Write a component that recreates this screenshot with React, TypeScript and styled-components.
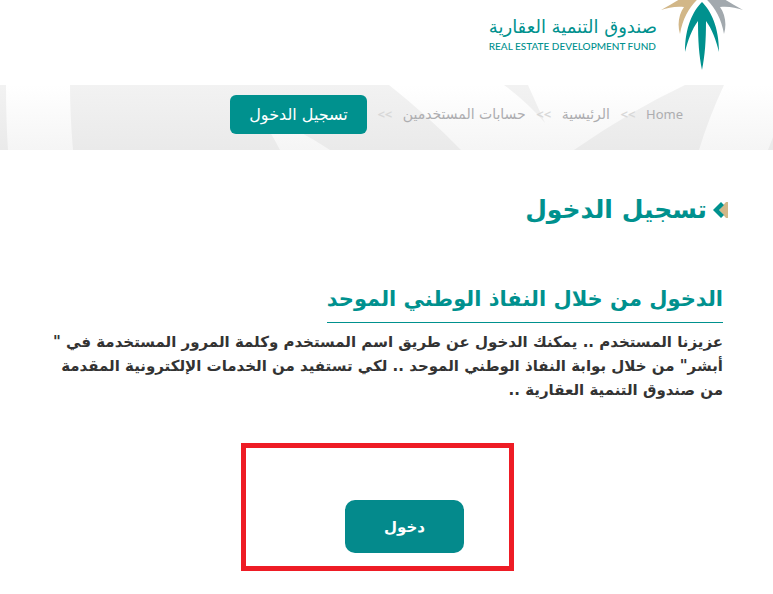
import React from "react";
import styled, { createGlobalStyle } from "styled-components";

const teal = "#00918e";

const GlobalStyle = createGlobalStyle`
  * { box-sizing: border-box; }
  body {
    margin: 0;
    background: #fff;
    color: #333;
    font-family: "DejaVu Sans", "Noto Sans", sans-serif;
  }
`;

const Page = styled.div`
  direction: rtl;
  overflow-x: hidden;
`;

const Header = styled.header`
  height: 85px;
  padding: 0 30px;
`;

const Brand = styled.a`
  display: inline-flex;
  align-items: flex-start;
  gap: 4px;
  color: ${teal};
  text-decoration: none;
`;

const BrandMark = styled.svg`
  display: block;
  width: 82px;
  height: 72px;
`;

const BrandText = styled.span`
  display: flex;
  flex-direction: column;
  padding-top: 15px;
  white-space: nowrap;
`;

const BrandArabic = styled.span`
  font-size: 18px;
  line-height: 24px;
`;

const BrandEnglish = styled.span`
  direction: ltr;
  font-family: Lato, sans-serif;
  font-size: 10px;
  font-weight: 500;
  line-height: 14px;
`;

const Band = styled.nav`
  position: relative;
  height: 65px;
  padding: 10px 90px;
  background: linear-gradient(#fff, #f5f5f5);
`;

const BandArt = styled.svg`
  position: absolute;
  inset: 0;
  width: 100%;
  height: 100%;
`;

const Trail = styled.ol`
  position: relative;
  display: flex;
  align-items: center;
  margin: 0;
  padding: 0;
  list-style: none;
  white-space: nowrap;
`;

const Crumb = styled.li`
  display: flex;
  align-items: center;
  font-size: 14px;
  line-height: 39px;
`;

const Separator = styled.span`
  width: 36px;
  color: #d8d8d8;
  font-family: "Open Sans", sans-serif;
  font-size: 13px;
  font-weight: 700;
  text-align: center;
`;

const CrumbLink = styled.a<{ $latin?: boolean }>`
  color: #adadb0;
  text-decoration: none;
  font-family: ${(p) => (p.$latin ? '"Noto Sans"' : '"DejaVu Sans"')}, sans-serif;
  font-size: ${(p) => (p.$latin ? 13 : 14)}px;
`;

const CurrentCrumb = styled.span`
  padding: 0 19px;
  border-radius: 6px;
  background: ${teal};
  color: #fff;
  font-size: 16px;
`;

const Content = styled.main`
  padding: 40px 45px 0;
`;

const Title = styled.h1`
  display: flex;
  align-items: center;
  gap: 6px;
  margin: 0;
  color: ${teal};
  font-size: 25px;
  line-height: 40px;
`;

const TitleMark = styled.svg`
  width: 15px;
  height: 18px;
`;

const Section = styled.section`
  padding: 50px 5px 0 0;
`;

const SectionTitle = styled.h2`
  width: fit-content;
  margin: 0;
  padding-bottom: 4px;
  border-bottom: 1px solid ${teal};
  color: ${teal};
  font-size: 21px;
  line-height: 38px;
  white-space: nowrap;
`;

const Message = styled.p`
  margin: 7px 0 0;
  font-size: 15px;
  font-weight: 700;
  line-height: 24px;
`;

const Line = styled.span`
  display: block;
  width: fit-content;
  white-space: nowrap;
`;

const Highlight = styled.div`
  width: 273px;
  height: 128px;
  margin: 41px 209px 0 0;
  padding: 52px 45px 0;
  border: 5px solid #ee1c25;
`;

const LoginButton = styled.button`
  display: block;
  width: 119px;
  height: 53px;
  border: 0;
  border-radius: 10px;
  background: #048a8c;
  color: #fff;
  font: 700 15px "DejaVu Sans", sans-serif;
  cursor: pointer;
`;

const crumbs = [
  { label: "Home", latin: true },
  { label: "الرئيسية" },
  { label: "حسابات المستخدمين" },
];

const App = () => (
  <Page lang="ar">
    <GlobalStyle />
    <Header>
      <Brand href="#">
        <BrandMark viewBox="0 0 82 72" aria-hidden="true">
          <path d="M0 10C9 5 16 1 22 -3L39 -3C29 6 22 17 19 34C16 24 18 14 23 7C14 6 7 8 0 10Z" fill="#d2b788" />
          <path d="M82 10C73 5 66 1 60 -3L43 -3C53 6 60 17 63 34C66 24 64 14 59 7C68 6 75 8 82 10Z" fill="#a2a9ae" />
          <path d="M41 2C32 11 24 27 24 52C27 40 31 29 37 21C37 41 38 55 41 70C44 55 45 41 45 21C51 29 55 40 58 52C58 27 50 11 41 2Z" fill={teal} />
        </BrandMark>
        <BrandText>
          <BrandArabic>صندوق التنمية العقارية</BrandArabic>
          <BrandEnglish>REAL ESTATE DEVELOPMENT FUND</BrandEnglish>
        </BrandText>
      </Brand>
    </Header>
    <Band>
      <BandArt viewBox="0 0 773 65" preserveAspectRatio="none" aria-hidden="true">
        <defs>
          <linearGradient id="shade" gradientUnits="userSpaceOnUse" x1="0" y1="0" x2="0" y2="65">
            <stop offset="0" stopColor="#f2f2f2" />
            <stop offset="1" stopColor="#eaeaea" />
          </linearGradient>
        </defs>
        <g fill="url(#shade)">
          <path d="M0 0H6Q6 35 8 65H0Z" />
          <path d="M70 0H389Q427 30 461 65H330Q300 45 255 25Q270 45 280 65H73Q70 30 70 0Z" />
          <path d="M504 0H528L545 38Q527 17 504 0Z" />
          <path d="M685 0H724Q709 32 699 65H574Q630 26 685 0Z" />
          <path d="M773 52V65H768Z" />
        </g>
      </BandArt>
      <Trail>
        {crumbs.map(({ label, latin }) => (
          <Crumb key={label}>
            <CrumbLink $latin={latin} href="#">{label}</CrumbLink>
            <Separator aria-hidden="true">{">>"}</Separator>
          </Crumb>
        ))}
        <Crumb><CurrentCrumb aria-current="page">تسجيل الدخول</CurrentCrumb></Crumb>
      </Trail>
    </Band>
    <Content>
      <Title>
        <TitleMark viewBox="0 0 15 18" aria-hidden="true">
          <path d="M15 1V17L13 17L6 9L13 1Z" fill="#d2b788" />
          <path d="M8 1L11 4L6 9L11 14L8 17L0 9Z" fill={teal} />
        </TitleMark>
        تسجيل الدخول
      </Title>
      <Section>
        <SectionTitle>الدخول من خلال النفاذ الوطني الموحد</SectionTitle>
        <Message>
          <Line>عزيزنا المستخدم .. يمكنك الدخول عن طريق اسم المستخدم وكلمة المرور المستخدمة في "</Line>
          <Line>أبشر" من خلال بوابة النفاذ الوطني الموحد .. لكي تستفيد من الخدمات الإلكترونية المقدمة</Line>
          <Line>من صندوق التنمية العقارية ..</Line>
        </Message>
        <Highlight>
          <LoginButton type="button">دخول</LoginButton>
        </Highlight>
      </Section>
    </Content>
  </Page>
);

export default App;
